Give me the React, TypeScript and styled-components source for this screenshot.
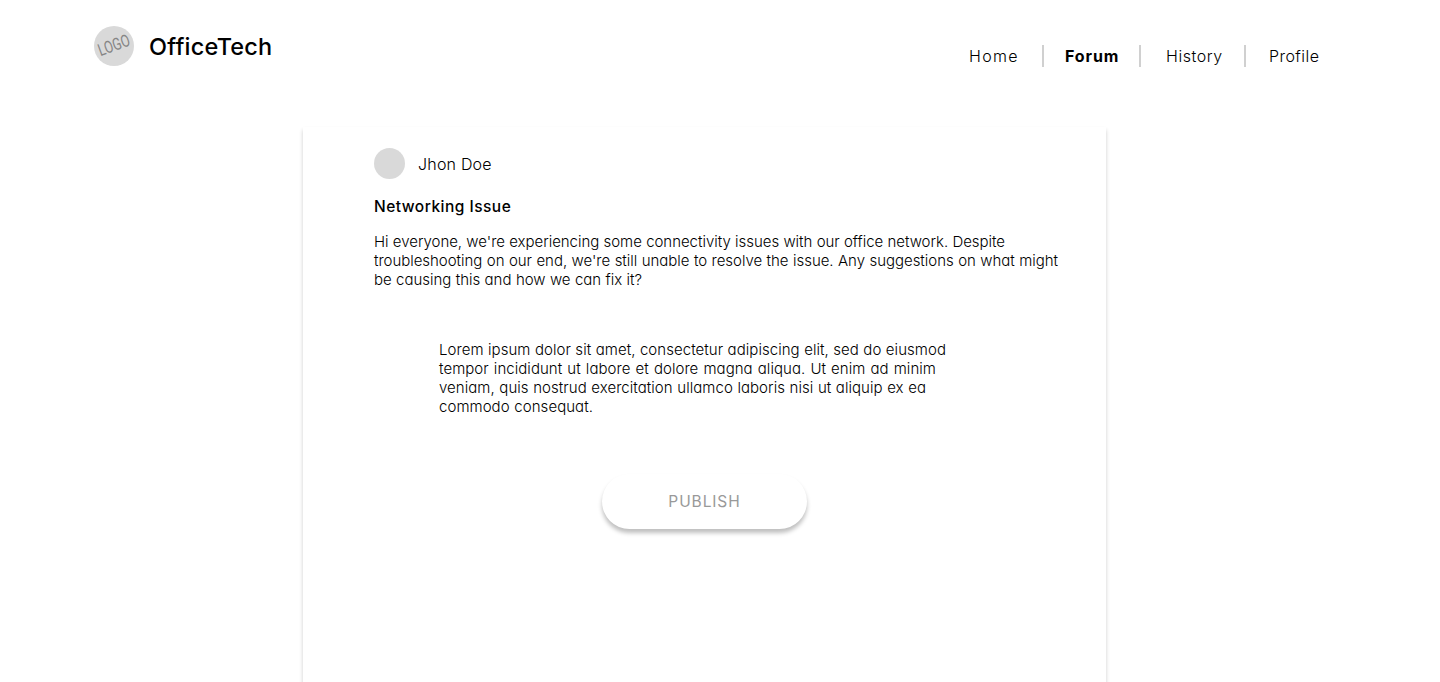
import React from "react";
import styled, { createGlobalStyle } from "styled-components";

const GlobalStyle = createGlobalStyle`
  * { box-sizing: border-box; }
  html, body { margin: 0; height: 100%; overflow: hidden; background: #fff; }
  body { font-family: Inter, "Open Sans", sans-serif; color: #000; }
  h1, h2, p { margin: 0; }
`;

const Page = styled.div`
  height: 682px;
  overflow: hidden;
`;

const Header = styled.header`
  display: flex;
  justify-content: space-between;
  height: 127px;
  padding: 26px 120px 0 94px;
`;

const Brand = styled.div`
  display: flex;
  align-items: center;
  gap: 15px;
  height: 40px;
`;

const Logo = styled.div`
  display: flex;
  align-items: center;
  justify-content: center;
  width: 40px;
  height: 40px;
  border-radius: 50%;
  background: #d9d9d9;
`;

const LogoText = styled.span`
  flex: none;
  font: 400 17px/20px Roboto, sans-serif;
  color: #858585;
  transform: translateY(-1px) rotate(-20deg) scaleX(0.75);
`;

/* A single line of text spread evenly over a set width. */
const Line = styled.span<{ $width: number }>`
  display: block;
  width: ${(p) => p.$width}px;
  white-space: nowrap;
  text-align-last: justify;
`;

const BrandName = styled.h1`
  font-size: 23.5px;
  line-height: 30px;
  font-weight: 450;
  letter-spacing: 0.2px;
  padding-top: 1px;
`;

const Nav = styled.nav`
  display: flex;
  height: 22px;
  margin-top: 19px;
`;

const NavItem = styled.a<{ $width: number; $before?: number; $after?: number; $active?: boolean; $spacing: number }>`
  width: ${(p) => p.$width}px;
  margin: 0 ${(p) => p.$after ?? 0}px 0 ${(p) => p.$before ?? 0}px;
  font-size: 16px;
  line-height: 23px;
  font-weight: ${(p) => (p.$active ? 750 : 350)};
  letter-spacing: ${(p) => p.$spacing}px;
  white-space: nowrap;
`;

const Divider = styled.span`
  width: 2px;
  height: 22px;
  background: #d0d0d0;
`;

const Card = styled.main`
  width: 803px;
  height: 620px;
  margin-left: 303px;
  padding: 21px 48px 0 71px;
  background: #fff;
  box-shadow: 0 3px 4px rgba(0, 0, 0, 0.2);
`;

const Author = styled.div`
  display: flex;
  align-items: center;
  gap: 13px;
  height: 31px;
  font-size: 16px;
  font-weight: 300;
  letter-spacing: 0.2px;
`;

const Avatar = styled.span`
  width: 31px;
  height: 31px;
  border-radius: 50%;
  background: #d9d9d9;
`;

const Title = styled.h2`
  margin-top: 18px;
  font-size: 15.5px;
  line-height: 20px;
  font-weight: 450;
  letter-spacing: 0.48px;
`;

const Text = styled.p<{ $spacing: number }>`
  margin-top: 15px;
  font-size: 15px;
  line-height: 19px;
  font-weight: 300;
  letter-spacing: ${(p) => p.$spacing}px;
  font-feature-settings: "cv11";
`;

const Reply = styled.section`
  padding: 36px 0 0 65px;
`;

const PublishButton = styled.button`
  display: block;
  width: 205px;
  height: 55px;
  margin: 58px 0 0 228px;
  padding: 0;
  border: 0;
  border-radius: 30px;
  background: #fff;
  box-shadow: 0 4px 4px rgba(0, 0, 0, 0.25);
  color: #999;
  font: 400 15.5px/20px Inter, sans-serif;
  letter-spacing: 0.9px;
`;

const post: [string, number][] = [
  ["Hi everyone, we're experiencing some connectivity issues with our office network. Despite", 631],
  ["troubleshooting on our end, we're still unable to resolve the issue. Any suggestions on what might", 684],
  ["be causing this and how we can fix it?", 268],
];

const reply: [string, number][] = [
  ["Lorem ipsum dolor sit amet, consectetur adipiscing elit, sed do eiusmod", 507],
  ["tempor incididunt ut labore et dolore magna aliqua. Ut enim ad minim", 497],
  ["veniam, quis nostrud exercitation ullamco laboris nisi ut aliquip ex ea", 487],
  ["commodo consequat.", 154],
];

export default function App() {
  return (
    <Page>
      <GlobalStyle />
      <Header>
        <Brand>
          <Logo><LogoText>LOGO</LogoText></Logo>
          <BrandName>OfficeTech</BrandName>
        </Brand>
        <Nav>
          <NavItem $width={50} $after={23} $spacing={1.3}>Home</NavItem>
          <Divider />
          <NavItem $width={55} $before={21} $after={19} $spacing={0.9} $active>Forum</NavItem>
          <Divider />
          <NavItem $width={58} $before={25} $after={20} $spacing={0.55}>History</NavItem>
          <Divider />
          <NavItem $width={51} $before={23} $spacing={0.45}>Profile</NavItem>
        </Nav>
      </Header>
      <Card>
        <Author><Avatar />Jhon Doe</Author>
        <Title>Networking Issue</Title>
        <Text $spacing={-0.03}>
          {post.map(([line, width]) => <Line key={line} $width={width}>{line}</Line>)}
        </Text>
        <Reply>
          <Text $spacing={0.05}>
            {reply.map(([line, width]) => <Line key={line} $width={width}>{line}</Line>)}
          </Text>
        </Reply>
        <PublishButton>PUBLISH</PublishButton>
      </Card>
    </Page>
  );
}
